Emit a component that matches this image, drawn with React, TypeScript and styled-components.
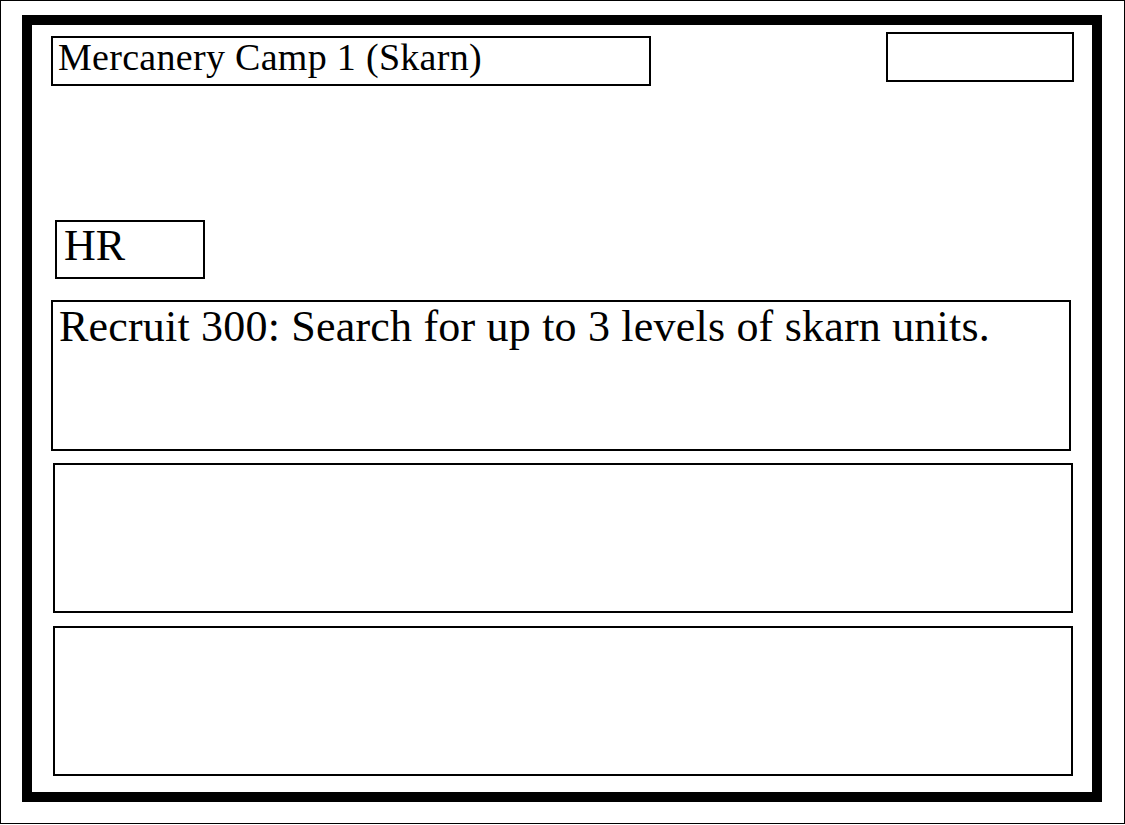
import React from 'react';
import styled, {createGlobalStyle} from 'styled-components';

const GlobalStyle = createGlobalStyle`
  html, body {
    margin: 0;
    padding: 0;
    background: #fff;
  }
  body {
    font-family: "Liberation Serif", "Times New Roman", serif;
    color: #000;
  }
`;

const Page = styled.div`
  box-sizing: border-box;
  width: 1125px;
  height: 824px;
  border: 1px solid #000;
  padding: 14px 0 0 21px;
`;

const Frame = styled.div`
  box-sizing: border-box;
  width: 1080px;
  height: 787px;
  border: 10px solid #000;
  display: flex;
  flex-direction: column;
  padding: 7px 18px 0 19px;
`;

const HeaderRow = styled.div`
  display: flex;
  justify-content: space-between;
  align-items: flex-start;
`;

const Box = styled.div<{$w: number; $h: number}>`
  box-sizing: border-box;
  width: ${p => p.$w}px;
  height: ${p => p.$h}px;
  border: 2px solid #000;
  line-height: 1;
  white-space: nowrap;
`;

const TitleBox = styled(Box)`
  margin-top: 4px;
  padding: 0 0 0 5px;
  font-size: 38px;
  letter-spacing: 0.3px;
`;

const Tab = styled(Box)`
  margin: 134px 0 0 4px;
  padding: 2px 0 0 7px;
  font-size: 44px;
`;

const Panel = styled(Box)<{$top: number; $left: number}>`
  margin: ${p => p.$top}px 0 0 ${p => p.$left}px;
  padding: 3px 0 0 6px;
  font-size: 44px;
  letter-spacing: 0.2px;
`;

const App = () => {
    return (
        <>
            <GlobalStyle />
            <Page>
                <Frame>
                    <HeaderRow>
                        <TitleBox $w={600} $h={50}>Mercanery Camp 1 (Skarn)</TitleBox>
                        <Box $w={188} $h={50} />
                    </HeaderRow>
                    <Tab $w={150} $h={59}>HR</Tab>
                    <Panel $w={1020} $h={151} $top={21} $left={0}>
                        Recruit 300: Search for up to 3 levels of skarn units.
                    </Panel>
                    <Panel $w={1020} $h={150} $top={12} $left={2} />
                    <Panel $w={1020} $h={150} $top={13} $left={2} />
                </Frame>
            </Page>
        </>
    );
};

export default App;
